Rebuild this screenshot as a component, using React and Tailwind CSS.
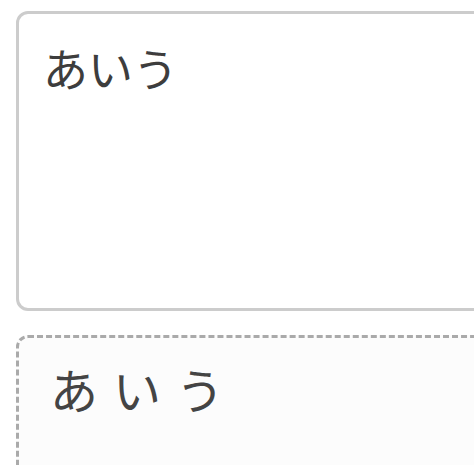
export default function App() {
  return (
    <div className="w-[474px] h-[465px] overflow-hidden bg-white" style={{ fontFamily: '"Noto Sans CJK JP", "Noto Sans", sans-serif' }}>
      <div className="pl-4 pt-[11px] flex flex-col gap-6 w-[560px]">
        <div className="h-[300px] border-[3px] border-[#cccccc] rounded-[12px] bg-white px-[24px] pt-[26px]">
          <div className="text-[45px] leading-[56px] text-[#3d3d3d]">あいう</div>
        </div>
        <div className="h-[300px] border-[3px] border-dashed border-[#aaaaaa] rounded-[12px] bg-[#fcfcfc] pl-[31px] pt-[20px]">
          <div className="text-[48px] leading-[60px] tracking-[15px] text-[#444444]">あいう</div>
        </div>
      </div>
    </div>
  );
}
